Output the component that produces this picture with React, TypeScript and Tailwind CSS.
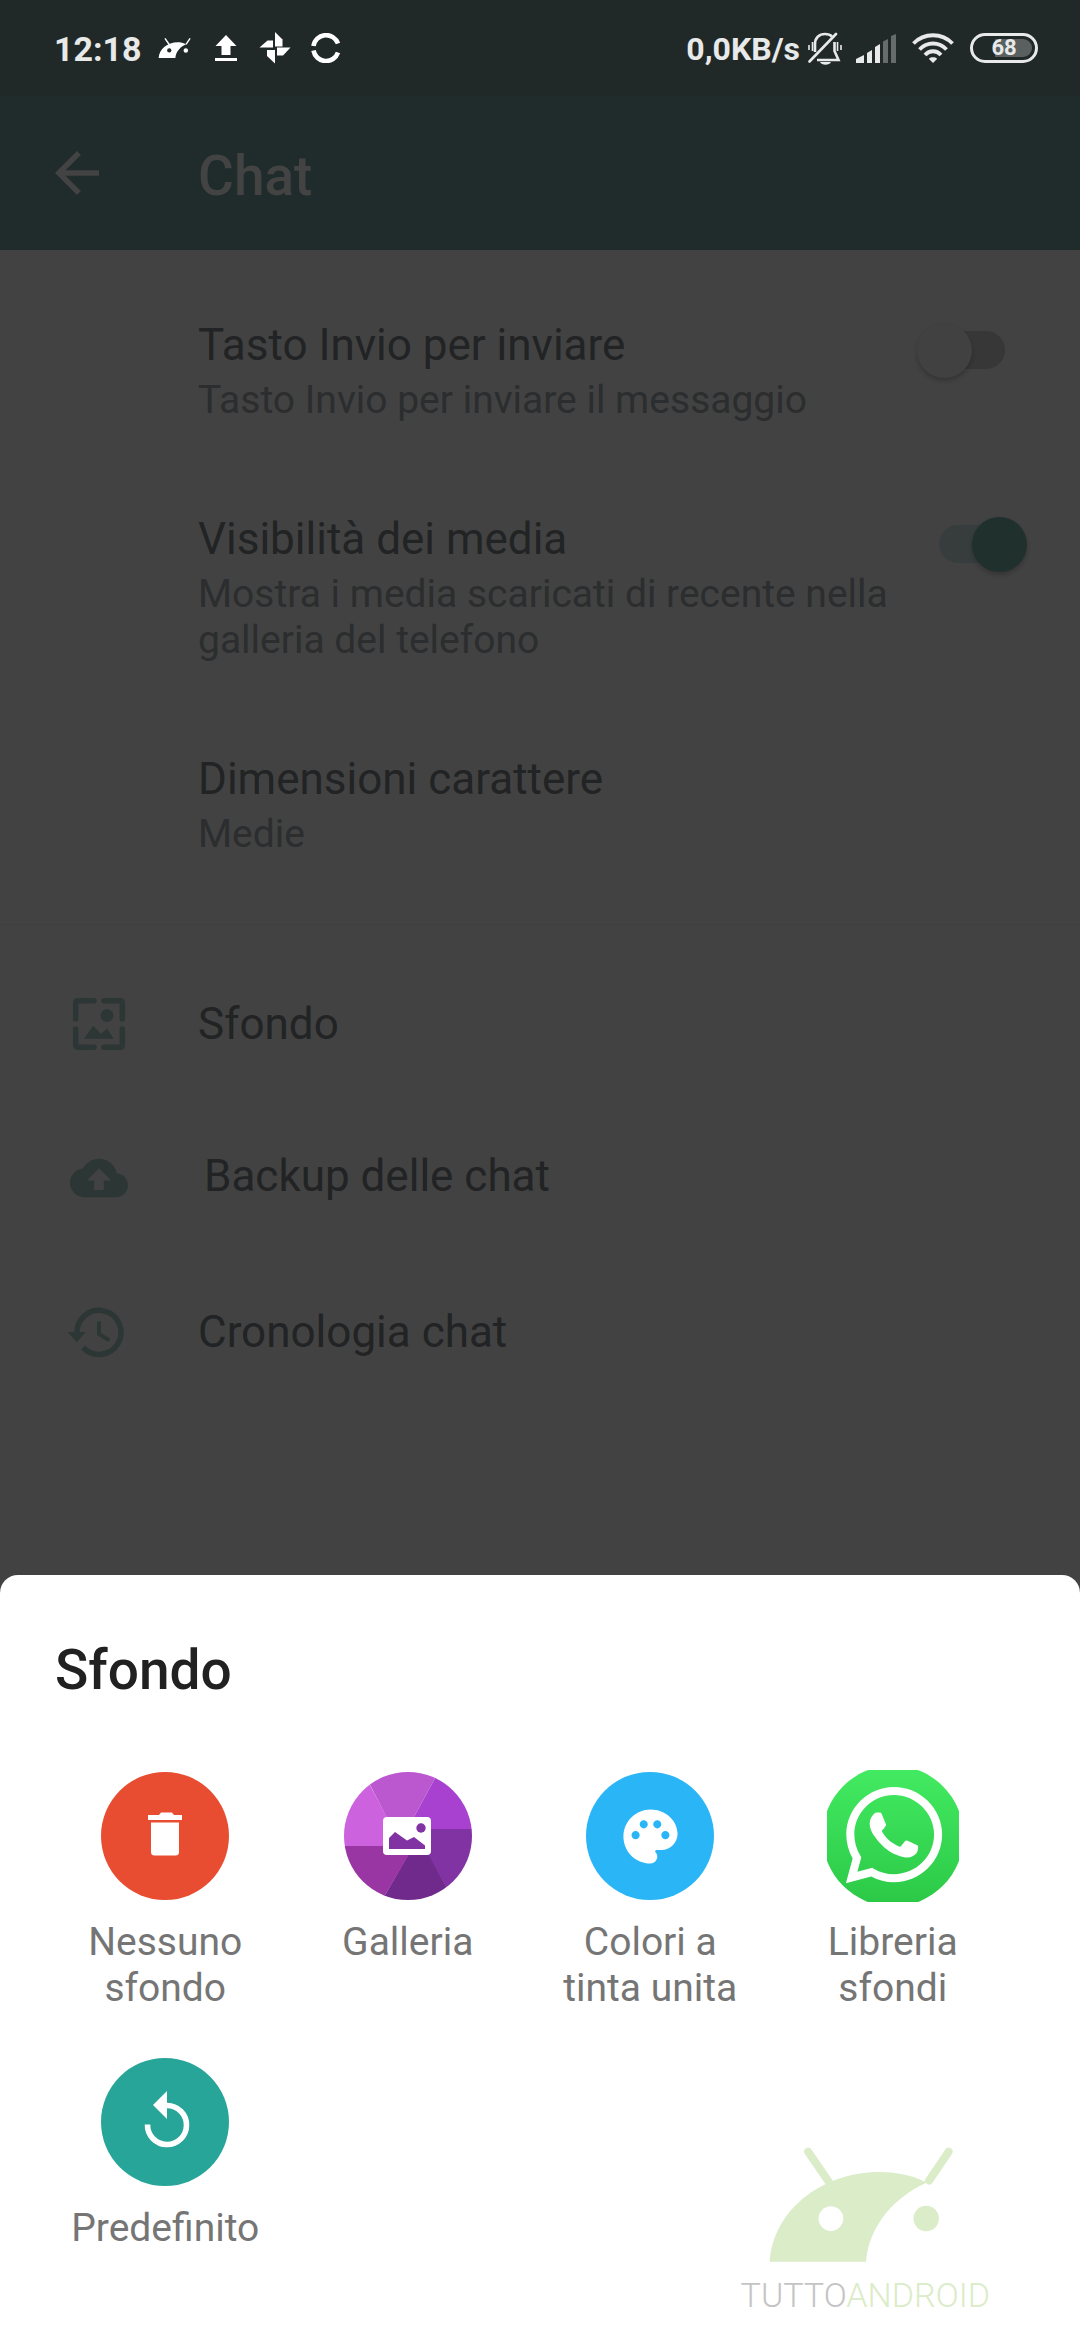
import React from 'react';
import { MdArrowBack, MdBackup, MdPalette } from 'react-icons/md';
import { FaWhatsapp } from 'react-icons/fa';

interface SwitchRow {
  id: string;
  title: string;
  summary: string;
  checked?: boolean;
}

interface WallpaperOption {
  label: string;
  icon: React.ReactNode;
}

const DroidHead = ({ className, eyeClassName }: { className: string; eyeClassName: string }) => (
  <svg viewBox="145 78 556 344" className={className} fill="currentColor" stroke="none">
    <path d="M150 421C160 272 300 153 480 153C528 153 575 163 612 181L640 176C520 222 446 318 438 421Z" />
    <path d="M265 92L332 190M685 92L627 178" stroke="currentColor" strokeWidth="24" strokeLinecap="round" />
    <circle cx="333" cy="292" r="37" className={eyeClassName} />
    <circle cx="618" cy="292" r="38" />
  </svg>
);

const UploadIcon = () => (
  <svg viewBox="0 0 22 26" className="w-[22px] h-[26px]" fill="currentColor">
    <path d="M11 0L21.5 11H15.500V20H6.500V11H0.500Z" />
    <path d="M0 23H22V26H0Z" />
  </svg>
);

const PinwheelIcon = () => (
  <svg viewBox="0 0 32 32" className="w-8 h-8" fill="currentColor">
    <path d="M16 0L23.500 7.500V14.500H16Z" />
    <path d="M31.500 15.500L24 23.500H18V15.500Z" />
    <path d="M16 31.500L8 24V18H16Z" />
    <path d="M0.500 15.500L8.500 8.500H14V15.500Z" />
  </svg>
);

const RingIcon = () => (
  <svg viewBox="0 0 30 30" className="w-[30px] h-[30px]" fill="none" stroke="currentColor" strokeWidth="4.600">
    <path d="M2.500 13A12.700 12.700 0 0 1 27 10.500" />
    <path d="M2.500 17.500A12.700 12.700 0 0 0 27 19.500" />
  </svg>
);

const BellOffIcon = () => (
  <svg viewBox="0 0 34 33" className="w-[34px] h-[33px]" fill="none" stroke="currentColor">
    <path d="M7 20V12C7 6 11 2 17 2C20 2 22.500 3 24 4.500M26.500 10V19L30.500 28H9" strokeWidth="2.600" />
    <path d="M1.500 29.500L28 2" strokeWidth="2.600" strokeLinecap="round" />
    <path d="M1 13V18M4.500 10V19M29.500 10V19M33 13V18" strokeWidth="1.600" />
    <path d="M12 30H23C21.500 33.500 13.500 33.500 12 30Z" fill="currentColor" stroke="none" />
  </svg>
);

const SignalIcon = () => (
  <svg viewBox="0 0 40 29" className="w-10 h-[29px]" fill="currentColor">
    <path d="M0 29V25L8 21V29Z" />
    <path d="M11 29V19L16 16V29Z" />
    <path d="M19 29V13L24 10V29Z" />
    <path d="M27 29V7.500L32 5V29Z" opacity="0.350" />
    <path d="M35 29V2L40 0V29Z" opacity="0.350" />
  </svg>
);

const WifiIcon = () => (
  <svg viewBox="0 0 42 30" className="w-[42px] h-[30px]" fill="none" stroke="currentColor" strokeWidth="3.800">
    <path d="M1.500 10.500C12 -0.500 30 -0.500 40.500 10.500" />
    <path d="M7.500 16.500C15 8.500 27 8.500 34.500 16.500" />
    <path d="M13 22C17.500 17 24.500 17 29 22" />
    <path d="M21 30L17 26C17 23.500 25 23.500 25 26Z" fill="currentColor" stroke="none" />
  </svg>
);

const WallpaperIcon = () => (
  <svg viewBox="0 0 60 60" className="w-[60px] h-[60px]" fill="none" stroke="currentColor">
    <path
      d="M25 6.700H9Q6.700 6.700 6.700 9V25M35 6.700H51Q53.300 6.700 53.300 9V25M6.700 35V51Q6.700 53.300 9 53.300H25M53.300 35V51Q53.300 53.300 51 53.300H35"
      strokeWidth="5.500"
      strokeLinecap="round"
    />
    <circle cx="38" cy="21.500" r="6.500" fill="currentColor" stroke="none" />
    <path d="M15 44.700L24.300 31.700L32 40L38 34.500L44.700 44.700Z" fill="currentColor" stroke="none" />
  </svg>
);

const HistoryIcon = () => (
  <svg viewBox="0 0 60 60" className="w-[60px] h-[60px] overflow-visible" fill="none" stroke="currentColor">
    <path d="M8 31A22 22 0 1 1 14 45.500" strokeWidth="5.500" />
    <path d="M30 21V32L39 37.500" strokeWidth="4" strokeLinecap="round" />
    <path d="M-1.300 30H16.700L7.700 40.300Z" fill="currentColor" stroke="none" />
  </svg>
);

const TrashCircle = () => (
  <svg viewBox="0 0 132 132" className="w-[132px] h-[132px]">
    <circle cx="66" cy="66" r="64" fill="#e84d31" />
    <path d="M49 45H60L62 42.500H73L75 45H83V50H49Z" fill="white" />
    <path d="M52 52.500H80V82Q80 85.500 76.500 85.500H55.500Q52 85.500 52 82Z" fill="white" />
  </svg>
);

const GalleryCircle = () => (
  <svg viewBox="0 0 132 132" className="w-[132px] h-[132px]">
    <clipPath id="gallery-disc">
      <circle cx="66" cy="66" r="64" />
    </clipPath>
    <g clipPath="url(#gallery-disc)">
      <path d="M20 -1H98L66 58H50Z" fill="#bb58cf" />
      <path d="M98 -1H132V59H66V58Z" fill="#a841d0" />
      <path d="M66 59H132V132H113L66 50Z" fill="#8132a3" />
      <path d="M113 132H39L73 73H80Z" fill="#6f2a8b" />
      <path d="M39 132H0V76H72Z" fill="#9936a4" />
      <path d="M0 76V0H20L60 76Z" fill="#cd62de" />
    </g>
    <rect x="41" y="47" width="48" height="38" rx="4" fill="white" />
    <path d="M47 79V68L53 62L65 70.500L72 67L83 75.500V79Z" fill="#8132a3" />
    <circle cx="79" cy="58" r="4.700" fill="#8132a3" />
  </svg>
);

const PaletteCircle = () => (
  <span className="flex w-32 h-32 m-0.5 items-center justify-center rounded-full bg-[#2ab5f6] text-white">
    <MdPalette className="w-[65px] h-[65px]" />
  </span>
);

const WhatsAppCircle = () => (
  <svg viewBox="0 0 132 132" className="w-[132px] h-[132px]">
    <linearGradient id="wa-green" x1="0" y1="0" x2="0" y2="1">
      <stop offset="0" stopColor="#43eb62" />
      <stop offset="1" stopColor="#2bc846" />
    </linearGradient>
    <circle cx="66" cy="66" r="70.500" fill="url(#wa-green)" />
    <FaWhatsapp x="12" y="10" size={110} color="white" />
  </svg>
);

const ResetCircle = () => (
  <svg viewBox="0 0 132 132" className="w-[132px] h-[132px]">
    <circle cx="66" cy="66" r="64" fill="#28a599" />
    <path d="M48.500 68.500A19.500 19.500 0 1 0 68 49.500" fill="none" stroke="white" strokeWidth="5.600" />
    <path d="M54 49L68 35V63Z" fill="white" />
  </svg>
);

const switchRows: SwitchRow[] = [
  { id: 'enter-send', title: 'Tasto Invio per inviare', summary: 'Tasto Invio per inviare il messaggio' },
  {
    id: 'media-visibility',
    title: 'Visibilità dei media',
    summary: 'Mostra i media scaricati di recente nella galleria del telefono',
    checked: true,
  },
];

const options: WallpaperOption[] = [
  { label: 'Nessuno sfondo', icon: <TrashCircle /> },
  { label: 'Galleria', icon: <GalleryCircle /> },
  { label: 'Colori a tinta unita', icon: <PaletteCircle /> },
  { label: 'Libreria sfondi', icon: <WhatsAppCircle /> },
  { label: 'Predefinito', icon: <ResetCircle /> },
];

const StatusBar = () => (
  <div className="flex h-24 items-center justify-between bg-[#212928] pl-[54px] pr-[42px] text-[#e8e9e9]">
    <div className="flex items-center text-white">
      <span className="mr-4 pt-0.5 text-[34px] leading-10 font-bold text-[#e8e9e9]">12:18</span>
      <DroidHead className="mr-6 h-5 w-[33px]" eyeClassName="fill-[#212928]" />
      <span className="mr-[22px]"><UploadIcon /></span>
      <span className="mr-5"><PinwheelIcon /></span>
      <RingIcon />
    </div>
    <div className="flex items-center">
      <span className="mr-2 pt-0.5 text-[32px] leading-10 font-bold">0,0KB/s</span>
      <span className="mr-3.5"><BellOffIcon /></span>
      <span className="mr-4"><SignalIcon /></span>
      <span className="mr-4"><WifiIcon /></span>
      <span className="flex h-[30px] w-[68px] items-center justify-center rounded-full border-3 border-[#e8e9e9] bg-linear-to-r from-transparent from-35% to-[#5a6060] to-35% bg-clip-content p-[3px] text-[22px] leading-none font-bold">
        68
      </span>
    </div>
  </div>
);

const LinkRow = ({ icon, title, inset }: { icon: React.ReactNode; title: string; inset?: boolean }) => (
  <button type="button" className="flex h-[154px] w-full items-center text-left">
    <span className="flex w-[198px] justify-center text-[#2c3735]">{icon}</span>
    <span className={inset ? 'pb-1 pl-1.5 text-[44px] leading-[52px]' : 'text-[44px] leading-[52px]'}>{title}</span>
  </button>
);

const App: React.FC = () => {
  return (
    <div className="flex min-h-screen flex-col bg-[#424242] font-['Roboto',sans-serif] text-[#212324]">
      <StatusBar />

      <header className="flex h-[154px] items-center bg-[#202b2b] text-[#434343]">
        <button type="button" aria-label="Indietro" className="w-[198px] pl-11">
          <MdArrowBack className="h-[66px] w-[66px]" />
        </button>
        <h1 className="pt-1.5 text-[55px] leading-[64px] font-medium">Chat</h1>
      </header>

      <main className="flex-1 pt-6">
        {switchRows.map((row) => (
          <div key={row.id} className="flex items-start py-[45px] pr-[53px] pl-[198px]">
            <label htmlFor={row.id} className="flex flex-1 flex-col gap-1.5">
              <span className="text-[44px] leading-[52px]">{row.title}</span>
              <span className="text-[39px] leading-[46px] text-[#2b2d2e]">{row.summary}</span>
            </label>
            <input
              id={row.id}
              type="checkbox"
              role="switch"
              defaultChecked={row.checked}
              className="relative mt-1 h-[55px] w-[110px] appearance-none before:absolute before:top-2 before:left-3 before:h-[38px] before:w-[76px] before:rounded-full before:bg-[#373737] after:absolute after:top-0 after:left-0 after:h-[55px] after:w-[55px] after:rounded-full after:bg-[#414141] after:shadow-[0_3px_4px_rgba(0,0,0,0.2)] checked:before:left-[22px] checked:before:bg-[#373d3d] checked:after:left-[55px] checked:after:bg-[#20302d]"
            />
          </div>
        ))}

        <button type="button" className="flex w-full flex-col gap-1.5 py-[45px] pl-[198px] text-left">
          <span className="text-[44px] leading-[52px]">Dimensioni carattere</span>
          <span className="text-[39px] leading-[46px] text-[#2b2d2e]">Medie</span>
        </button>

        <hr className="my-[22px] border-[#3f3f3f]" />

        <LinkRow icon={<WallpaperIcon />} title="Sfondo" />
        <LinkRow icon={<MdBackup className="h-[58px] w-[58px]" />} title="Backup delle chat" inset />
        <LinkRow icon={<HistoryIcon />} title="Cronologia chat" />
      </main>

      <section
        aria-labelledby="sheet-title"
        className="relative rounded-t-[18px] bg-white pt-[63px] pr-[66px] pb-[89px] pl-11"
      >
        <h2 id="sheet-title" className="pl-[11px] text-[55px] leading-[64px] font-medium text-[#212121]">
          Sfondo
        </h2>
        <div className="mt-[68px] grid grid-cols-4 gap-y-[45px]">
          {options.map((option) => (
            <button key={option.label} type="button" className="flex flex-col items-center gap-[17px]">
              {option.icon}
              <span className="max-w-[200px] text-[39px] leading-[46px] text-[#757575]">{option.label}</span>
            </button>
          ))}
        </div>

        {/* site watermark, over the sheet's lower right corner */}
        <div className="absolute right-[90px] bottom-[22px] flex flex-col items-center text-[#dbecc8]">
          <DroidHead className="mr-2 h-[115px] w-[186px]" eyeClassName="fill-white" />
          <p className="mt-2.5 text-[34px] leading-[46px] font-light">
            <span className="text-[#c4c4c4]">TUTTO</span>ANDROID
          </p>
        </div>
      </section>
    </div>
  );
};

export default App;
